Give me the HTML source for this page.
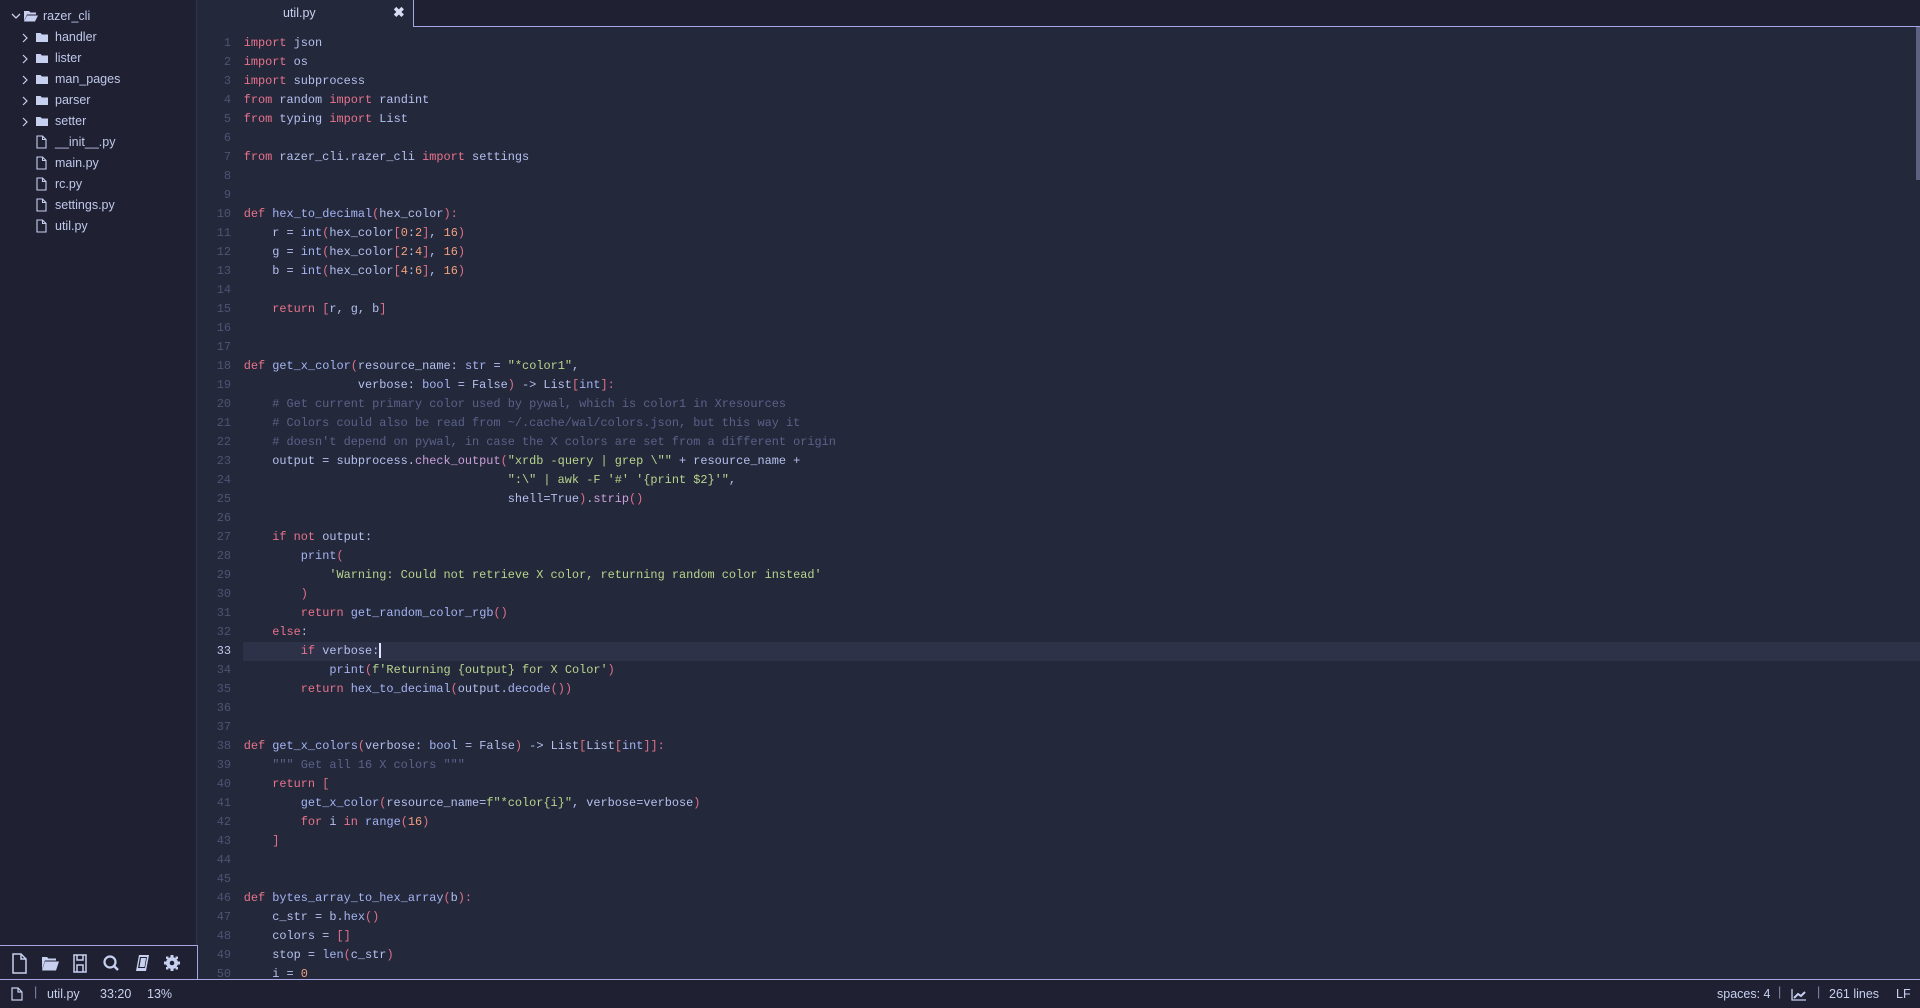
<!DOCTYPE html>
<html><head><meta charset="utf-8"><style>
*{margin:0;padding:0;box-sizing:border-box}
body{width:1920px;height:1008px;overflow:hidden;background:#24283b;position:relative;font-family:"Liberation Sans",sans-serif}
#side{position:absolute;left:0;top:0;width:197px;height:980px;background:#1f2133;border-right:1px solid #2f3350}
.it{position:absolute;font-size:12.5px;color:#c0c8ea;height:20px;line-height:20px;white-space:nowrap}
#tabbar{position:absolute;left:198px;top:0;right:0;height:27px;background:#1f2133}
#tab{position:absolute;left:198px;top:0;width:216px;height:27px;background:#24283b;border-right:1.5px solid #a9a6e6}
#tabline{position:absolute;left:414px;top:25.5px;right:0;height:1.5px;background:#a9a6e6}
#tab .t{position:absolute;left:85px;top:6px;font-size:12.5px;color:#c8d0f0}
#tab .x{position:absolute;left:195px;top:4px;font-size:14px;color:#d8dcf5;font-weight:bold}
#code{position:absolute;left:0;top:33.6px;font-family:"Liberation Mono",monospace;font-size:11.9px;color:#b4c0ee;white-space:pre}
.l{height:19.02px;line-height:19.02px;position:relative}
.ln{position:absolute;left:198px;width:33px;text-align:right;color:#4d5474}
.tx{position:absolute;left:243.7px}
.cur{background:#2e3249;left:243px;width:1677px;position:absolute;height:19.02px}
.k{color:#e8738c}.f{color:#a4b4f2}.s{color:#b7d58c}.n{color:#f4a07e}.c{color:#5a6288}.p{color:#e0708a}.m{color:#c9a0d8}
#scroll{position:absolute;left:1916px;top:27px;width:4px;height:153px;background:#5c6180}
#tool{position:absolute;left:0;top:945px;width:198px;height:35px;border-top:1.5px solid #a9a6e6;border-right:1.5px solid #a9a6e6;background:#1f2133}
#status{position:absolute;left:0;top:979px;width:1920px;height:29px;background:#1f2133;border-top:1.5px solid #a9a6e6;font-size:12.5px;color:#c8d0f0}
#status span{position:absolute;top:7px}
</style></head><body>
<div id="side">
<svg style="position:absolute;left:10px;top:11px" width="12" height="10"><path d="M2 3 L6 7 L10 3" stroke="#c8d0f0" stroke-width="1.3" fill="none"/></svg>
<svg style="position:absolute;left:23px;top:9px" width="16" height="14"><path d="M1 2h5l1.5 1.5H13v2H4L1 12z" fill="#c8d0f0"/><path d="M4 6.5h11L12 12.5H1z" fill="#c8d0f0"/></svg>
<div class="it" style="left:43px;top:6px">razer_cli</div>
<div id="folders"></div>
</div>
<div id="tabbar"></div>
<div id="tab"><span class="t">util.py</span><span class="x">✖</span></div>
<div id="tabline"></div>
<div id="scroll"></div>
<div id="code"></div>
<div id="tool">
<svg width="198" height="34" style="position:absolute;left:0;top:0">
<g fill="none" stroke="#c8d0f0" stroke-width="1.5">
<path d="M13 8h8l5 5v14H13z M21 8v5h5"/>
<path d="M74 9h12v17H74z M77 9v5h6V9 M77 19h6v7h-6z"/>
<circle cx="110" cy="16" r="5.5" stroke-width="2.2"/><path d="M114 20l4 4" stroke-width="2.5"/>
</g>
<g fill="#c8d0f0">
<path d="M42 11h5l1.5 1.5H56v2H45l-3 9z"/><path d="M45 15.5h14l-3 9H42z"/>
<path d="M139 9h10l-3 16h-10z"/><path d="M140 11h7l-2 11h-7z" fill="#1f2133"/><path d="M141 12h5l-1.5 9h-5z"/>
<circle cx="172" cy="17" r="6"/>
<path d="M170.5 9h3v3h-3zM170.5 22h3v3h-3zM164 15.5h3v3h-3zM177 15.5h3v3h-3z M166 10.5l2.5 0 0 2.5-2.5 0z M175.5 21l2.5 0 0 2.5-2.5 0z M175.5 10.5l2.5 0 0 2.5-2.5 0z M166 21l2.5 0 0 2.5-2.5 0z"/>
<circle cx="172" cy="17" r="2.3" fill="#1f2133"/>
</g></svg>
</div>
<div id="status">
<svg style="position:absolute;left:11px;top:7px" width="12" height="14"><path d="M1 1h6l4 4v8H1z M7 1v4h4" fill="none" stroke="#c8d0f0" stroke-width="1.2"/></svg>
<span style="left:34px;top:5px;color:#8088a8">|</span>
<span style="left:47px">util.py</span>
<span style="left:100px">33:20</span>
<span style="left:147px">13%</span>
<span style="left:1717px">spaces: 4</span>
<span style="left:1778px;top:5px;color:#8088a8">|</span>
<svg style="position:absolute;left:1791px;top:8px" width="16" height="13"><path d="M1 1v11h14" stroke="#c8d0f0" stroke-width="1.3" fill="none"/><path d="M3 10l4-4 3 2 4-4" stroke="#c8d0f0" stroke-width="2" fill="none"/></svg>
<span style="left:1817px;top:5px;color:#8088a8">|</span>
<span style="left:1829px">261 lines</span>
<span style="left:1896px">LF</span>
</div>
<script>
var f=[["handler",1],["lister",1],["man_pages",1],["parser",1],["setter",1],["__init__.py",0],["main.py",0],["rc.py",0],["settings.py",0],["util.py",0]];
var h="";f.forEach(function(x,i){var y=27+i*21;
if(x[1]){h+='<svg style="position:absolute;left:21px;top:'+(y+6)+'px" width="8" height="10"><path d="M2 1l4 4-4 4" stroke="#c8d0f0" stroke-width="1.2" fill="none"/></svg><svg style="position:absolute;left:36px;top:'+(y+5)+'px" width="12" height="10"><path d="M0 1h4.5l1.5 1.5H12V10H0z" fill="#c8d0f0"/></svg>';}
else{h+='<svg style="position:absolute;left:36px;top:'+(y+3)+'px" width="11" height="14"><path d="M1 1h5.5l3.5 3.5V13H1z M6.5 1v3.5H10" fill="none" stroke="#c8d0f0" stroke-width="1.1"/></svg>';}
h+='<div class="it" style="left:55px;top:'+y+'px">'+x[0]+'</div>';});
document.getElementById("folders").innerHTML=h;
var L=[
'<span class="k">import</span> json',
'<span class="k">import</span> os',
'<span class="k">import</span> subprocess',
'<span class="k">from</span> random <span class="k">import</span> randint',
'<span class="k">from</span> typing <span class="k">import</span> List',
'',
'<span class="k">from</span> razer_cli.razer_cli <span class="k">import</span> settings',
'','',
'<span class="k">def</span> <span class="f">hex_to_decimal</span><span class="p">(</span>hex_color<span class="p">):</span>',
'    r = <span class="f">int</span><span class="p">(</span>hex_color<span class="p">[</span><span class="n">0</span>:<span class="n">2</span><span class="p">]</span>, <span class="n">16</span><span class="p">)</span>',
'    g = <span class="f">int</span><span class="p">(</span>hex_color<span class="p">[</span><span class="n">2</span>:<span class="n">4</span><span class="p">]</span>, <span class="n">16</span><span class="p">)</span>',
'    b = <span class="f">int</span><span class="p">(</span>hex_color<span class="p">[</span><span class="n">4</span>:<span class="n">6</span><span class="p">]</span>, <span class="n">16</span><span class="p">)</span>',
'',
'    <span class="k">return</span> <span class="p">[</span>r, g, b<span class="p">]</span>',
'','',
'<span class="k">def</span> <span class="f">get_x_color</span><span class="p">(</span>resource_name: <span class="f">str</span> = <span class="s">"*color1"</span>,',
'                verbose: <span class="f">bool</span> = False<span class="p">)</span> -&gt; List<span class="p">[</span><span class="f">int</span><span class="p">]:</span>',
'    <span class="c"># Get current primary color used by pywal, which is color1 in Xresources</span>',
'    <span class="c"># Colors could also be read from ~/.cache/wal/colors.json, but this way it</span>',
'    <span class="c"># doesn\'t depend on pywal, in case the X colors are set from a different origin</span>',
'    output = subprocess.<span class="m">check_output</span><span class="p">(</span><span class="s">"xrdb -query | grep \\""</span> + resource_name +',
'                                     <span class="s">":\\" | awk -F \'#\' \'{print $2}\'"</span>,',
'                                     shell=True<span class="p">)</span>.<span class="m">strip</span><span class="p">()</span>',
'',
'    <span class="k">if</span> <span class="k">not</span> output:',
'        <span class="f">print</span><span class="p">(</span>',
'            <span class="s">\'Warning: Could not retrieve X color, returning random color instead\'</span>',
'        <span class="p">)</span>',
'        <span class="k">return</span> <span class="f">get_random_color_rgb</span><span class="p">()</span>',
'    <span class="k">else</span>:',
'        <span class="k">if</span> verbose:',
'            <span class="f">print</span><span class="p">(</span><span class="s">f\'Returning {output} for X Color\'</span><span class="p">)</span>',
'        <span class="k">return</span> <span class="f">hex_to_decimal</span><span class="p">(</span>output.<span class="f">decode</span><span class="p">())</span>',
'','',
'<span class="k">def</span> <span class="f">get_x_colors</span><span class="p">(</span>verbose: <span class="f">bool</span> = False<span class="p">)</span> -&gt; List<span class="p">[</span>List<span class="p">[</span><span class="f">int</span><span class="p">]]:</span>',
'    <span class="c">""" Get all 16 X colors """</span>',
'    <span class="k">return</span> <span class="p">[</span>',
'        <span class="f">get_x_color</span><span class="p">(</span>resource_name=<span class="s">f"*color{i}"</span>, verbose=verbose<span class="p">)</span>',
'        <span class="k">for</span> i <span class="k">in</span> <span class="f">range</span><span class="p">(</span><span class="n">16</span><span class="p">)</span>',
'    <span class="p">]</span>',
'','',
'<span class="k">def</span> <span class="f">bytes_array_to_hex_array</span><span class="p">(</span>b<span class="p">):</span>',
'    c_str = b.<span class="f">hex</span><span class="p">()</span>',
'    colors = <span class="p">[]</span>',
'    stop = <span class="f">len</span><span class="p">(</span>c_str<span class="p">)</span>',
'    i = <span class="n">0</span>'];
var c="";L.forEach(function(t,i){var n=i+1;
c+='<div class="l">'+(n==33?'<div class="cur"></div>':'')+'<span class="ln"'+(n==33?' style="color:#c0c8f0"':'')+'>'+n+'</span><span class="tx">'+t+(n==33?'<span style="display:inline-block;width:1.5px;height:15px;background:#e0e4ff;vertical-align:middle"></span>':'')+'</span></div>';});
document.getElementById("code").innerHTML=c;
</script>
</body></html>
